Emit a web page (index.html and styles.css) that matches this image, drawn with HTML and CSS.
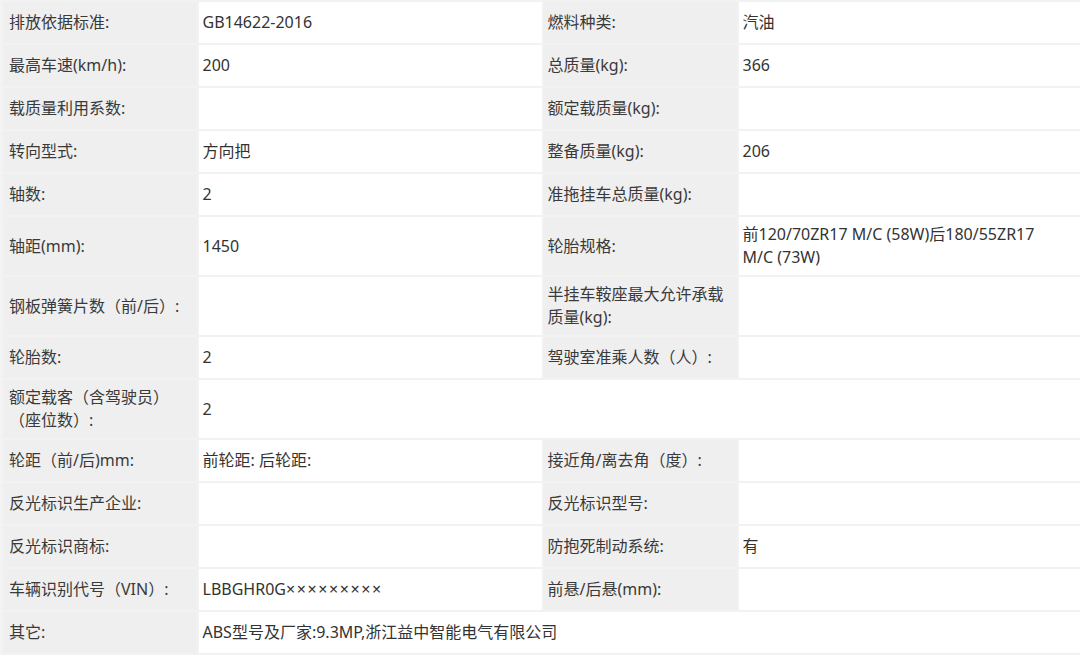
FILE: index.html
```html
<!DOCTYPE html>
<html lang="zh-CN">
<head>
<meta charset="utf-8">
<link rel="stylesheet" href="styles.css">
</head>
<body>
<table class="spec">
<colgroup><col class="c1"><col class="c2"><col class="c3"><col class="c4"></colgroup>
<tbody>
<tr><td class="lb">排放依据标准:</td><td>GB14622-2016</td><td class="lb">燃料种类:</td><td>汽油</td></tr>
<tr><td class="lb">最高车速(km/h):</td><td>200</td><td class="lb">总质量(kg):</td><td>366</td></tr>
<tr><td class="lb">载质量利用系数:</td><td></td><td class="lb">额定载质量(kg):</td><td></td></tr>
<tr><td class="lb">转向型式:</td><td>方向把</td><td class="lb">整备质量(kg):</td><td>206</td></tr>
<tr><td class="lb">轴数:</td><td>2</td><td class="lb">准拖挂车总质量(kg):</td><td></td></tr>
<tr class="tall"><td class="lb">轴距(mm):</td><td>1450</td><td class="lb">轮胎规格:</td><td>前120/70ZR17 M/C (58W)后180/55ZR17 M/C (73W)</td></tr>
<tr class="tall"><td class="lb">钢板弹簧片数（前/后）:</td><td></td><td class="lb">半挂车鞍座最大允许承载质量(kg):</td><td></td></tr>
<tr><td class="lb">轮胎数:</td><td>2</td><td class="lb">驾驶室准乘人数（人）:</td><td></td></tr>
<tr class="tall"><td class="lb">额定载客（含驾驶员）（座位数）:</td><td colspan="3">2</td></tr>
<tr><td class="lb">轮距（前/后)mm:</td><td>前轮距: 后轮距:</td><td class="lb">接近角/离去角（度）:</td><td></td></tr>
<tr><td class="lb">反光标识生产企业:</td><td></td><td class="lb">反光标识型号:</td><td></td></tr>
<tr><td class="lb">反光标识商标:</td><td></td><td class="lb">防抱死制动系统:</td><td>有</td></tr>
<tr><td class="lb">车辆识别代号（VIN）:</td><td>LBBGHR0G<span class="mask">×××××××××</span></td><td class="lb">前悬/后悬(mm):</td><td></td></tr>
<tr><td class="lb">其它:</td><td colspan="3">ABS型号及厂家:9.3MP,浙江益中智能电气有限公司</td></tr>
</tbody>
</table>
</body>
</html>
```
FILE: styles.css
```css
html, body {
  margin: 0;
  padding: 0;
  background: #ffffff;
}
body {
  font-family: "Noto Sans", "Noto Sans CJK SC", sans-serif;
  font-size: 16px;
  color: #333333;
}
.spec {
  width: 1080px;
  border-collapse: collapse;
  table-layout: fixed;
  border-left: 3px solid #f3f3f3;
  border-right: 2px solid #f0f0f0;
}
.c1 { width: 196px; }
.c2 { width: 345px; }
.c3 { width: 195px; }
.c4 { width: 344px; }
.spec tr { height: 43px; }
.spec tr.tall { height: 60px; }
.spec td {
  border: 2px solid #f2f2f2;
  padding: 6px 14px 6px 4px;
  line-height: 23px;
  vertical-align: middle;
}
.spec td.lb {
  background: #efefef;
  color: #3a3a3a;
  padding-right: 6px;
}
.spec td:first-child {
  padding-left: 6px;
}
.mask {
  letter-spacing: 1.6px;
}
```
